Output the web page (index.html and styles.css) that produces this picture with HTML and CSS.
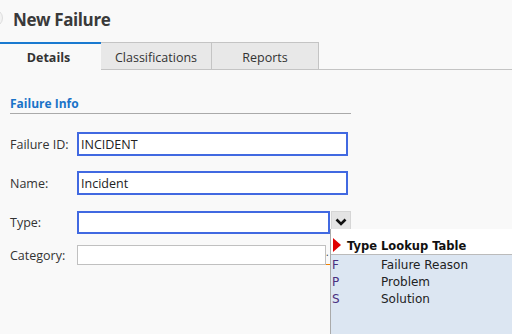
FILE: index.html
```html
<!DOCTYPE html>
<html lang="en">
<head>
  <meta charset="UTF-8" />
  <title>New Failure</title>
  <link rel="stylesheet" href="styles.css">
</head>
<body>
  <header class="title-bar">
    <span class="title-icon"></span>
    <h1>New Failure</h1>
  </header>

  <nav class="tabs">
    <div class="tab active">Details</div>
    <div class="tab">Classifications</div>
    <div class="tab">Reports</div>
  </nav>

  <main class="panel">
    <div class="section-title">Failure Info</div>

    <div class="field">
      <label>Failure ID:</label>
      <div class="input focus">INCIDENT</div>
    </div>
    <div class="field">
      <label>Name:</label>
      <div class="input focus">Incident</div>
    </div>
    <div class="field">
      <label>Type:</label>
      <div class="input focus type-input"></div>
      <button class="drop-btn">
        <svg width="12" height="8" viewBox="0 0 12 8"><path d="M1.5 1.5 L6 6 L10.5 1.5" fill="none" stroke="#111" stroke-width="2.6"/></svg>
      </button>
    </div>
    <div class="field field-small">
      <label>Category:</label>
      <div class="input plain"></div>
      <span class="mini-btn">.</span>
    </div>
  </main>

  <div class="lookup">
    <div class="lookup-head">
      <span class="arrow"></span>
      <span>Type Lookup Table</span>
    </div>
    <div class="lookup-body">
      <div class="lookup-row"><span class="code">F</span><span>Failure Reason</span></div>
      <div class="lookup-row"><span class="code">P</span><span>Problem</span></div>
      <div class="lookup-row"><span class="code">S</span><span>Solution</span></div>
    </div>
  </div>
</body>
</html>
```

FILE: styles.css
```css
body {
  margin: 0;
  background: #f9f9f9;
  font-family: "Open Sans", "Noto Sans", sans-serif;
  color: #333;
  overflow: hidden;
}
.title-bar {
  height: 42px;
  display: flex;
  align-items: center;
  padding-left: 13px;
  position: relative;
  box-sizing: border-box;
  padding-bottom: 4px;
}
.title-icon {
  position: absolute;
  left: -15px;
  top: 9px;
  width: 16px;
  height: 16px;
  border: 1px solid #ddd;
  border-radius: 50%;
  background: #f3f3f3;
}
.title-bar h1 {
  margin: 0;
  font-size: 17px;
  font-weight: 700;
  color: #3a3a3a;
  letter-spacing: -0.4px;
}
.tabs {
  display: flex;
  height: 28px;
  border-bottom: 1px solid #c4c4c4;
  box-sizing: border-box;
}
.tab {
  width: 111px;
  height: 28px;
  box-sizing: border-box;
  border: 1px solid #c4c4c4;
  border-left: none;
  background: #e8e8e8;
  font-size: 12.5px;
  color: #333;
  display: flex;
  align-items: center;
  justify-content: center;
  padding-top: 2px;
}
.tab:last-child {
  width: 107px;
}
.tab.active {
  width: 101px;
  border: none;
  border-top: 2px solid #1a7ad0;
  background: #f9f9f9;
  font-weight: 700;
  padding-top: 0;
  padding-right: 4px;
}
.panel {
  padding: 25px 0 0 10px;
}
.section-title {
  width: 341px;
  font-size: 12px;
  font-weight: 700;
  color: #1a73c8;
  border-bottom: 1px solid #aaa;
  padding-bottom: 1px;
  margin-bottom: 18px;
}
.field {
  display: flex;
  align-items: center;
  height: 24px;
  margin-bottom: 15px;
}
.field label {
  width: 67px;
  font-size: 12.5px;
  color: #333;
}
.input {
  width: 271px;
  height: 24px;
  box-sizing: border-box;
  background: #fff;
  font-size: 12.5px;
  color: #222;
  display: flex;
  align-items: center;
  padding-left: 2px;
}
.input.focus {
  border: 2px solid #4169e1;
}
.type-input {
  width: 253px;
  height: 23px;
}
.drop-btn {
  width: 20px;
  height: 22px;
  margin-left: 1px;
  padding: 0;
  border: 1px solid #d6d6d6;
  background: #e4e4e4;
  display: flex;
  align-items: center;
  justify-content: center;
}
.field-small {
  height: 20px;
  margin-top: -4px;
}
.input.plain {
  width: 249px;
  height: 20px;
  border: 1px solid #c0c0c0;
}
.mini-btn {
  font-size: 10px;
  color: #333;
  border-bottom: 1px solid #f08000;
  width: 5px;
  height: 19px;
}
.lookup {
  position: absolute;
  left: 330px;
  top: 229px;
  width: 182px;
  height: 105px;
  border-left: 1px solid #aaa;
  font-family: "DejaVu Sans", Verdana, sans-serif;
}
.lookup-head {
  height: 26px;
  background: #fff;
  border-bottom: 1px solid #bbb;
  display: flex;
  align-items: flex-end;
  padding-bottom: 1px;
  box-sizing: border-box;
  font-size: 11.5px;
  font-weight: 700;
  color: #111;
}
.arrow {
  width: 0;
  height: 0;
  border-top: 7px solid transparent;
  border-bottom: 7px solid transparent;
  border-left: 8px solid #e00000;
  margin: 0 6px 1px 2px;
}
.lookup-body {
  height: 79px;
  background: #dce6f2;
  padding-top: 1px;
  box-sizing: border-box;
}
.lookup-row {
  display: flex;
  height: 17px;
  align-items: center;
  font-size: 12px;
  color: #222;
}
.code {
  width: 49px;
  padding-left: 1px;
  color: #4a2f80;
}
```
